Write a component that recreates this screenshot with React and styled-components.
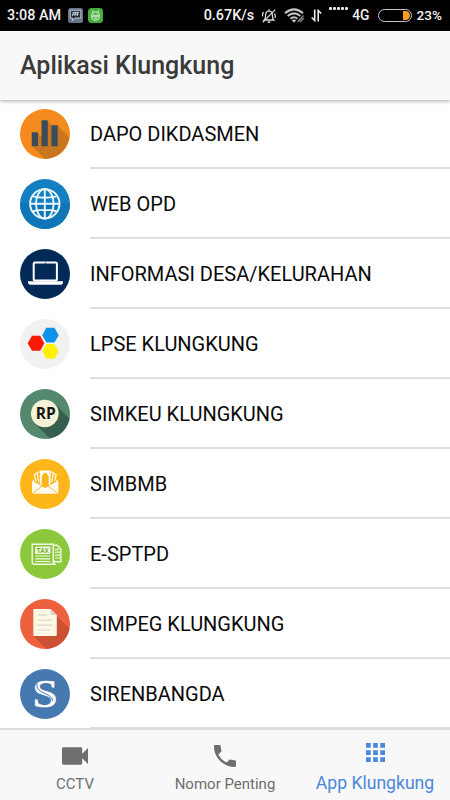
import React from "react";
import styled, { createGlobalStyle, css } from "styled-components";

const Colors = {
  bar: "#f8f8f8",
  title: "#3a3a3a",
  text: "#0a0a0a",
  line: "#dedede",
  muted: "#6e6e6e",
  blue: "#4a87dd",
};

const Bars = () => (
  <>
    <circle cx="25" cy="25" r="25" fill="#f58b1f" />
    <path
      d="M17.5 23.5L22 28V11.5L27.5 11.5L32 17L37.5 16.5L49 28A25 25 0 0 1 25 50L12 37Z"
      fill="#c8761f"
      clipPath="url(#disc)"
    />
    <g fill="#3b4d58">
      <rect x="11.7" y="23.2" width="6.3" height="14" rx="1" />
      <rect x="21.5" y="11.3" width="6.3" height="25.9" rx="1" />
      <rect x="31.4" y="16.2" width="6.3" height="21" rx="1" />
    </g>
  </>
);

const Globe = () => (
  <>
    <circle cx="25" cy="25" r="25" fill="#1580c1" />
    <path d="M0 25Q25 21 50 25A25 25 0 0 1 0 25Z" fill="#0f77b8" />
    <g fill="none" stroke="#e9f8fc" strokeWidth="1.9">
      <circle cx="24.8" cy="24.8" r="14.7" />
      <ellipse cx="24.8" cy="24.8" rx="8.8" ry="14.7" />
      <path d="M24.8 10V39.7M10 24.8H39.7M13 17.4Q24.8 20 36.6 17.4M13 32.2Q24.8 29.6 36.6 32.2" />
    </g>
  </>
);

const Laptop = () => (
  <>
    <circle cx="25" cy="25" r="25" fill="#032a57" />
    <rect
      x="13.7"
      y="13.5"
      width="23.2"
      height="18"
      rx="1.2"
      fill="none"
      stroke="#fff"
      strokeWidth="2"
    />
    <circle cx="25.3" cy="13.8" r="0.6" fill="#032a57" />
    <path d="M8 32.2H43V33.8Q42.6 35.7 40.8 35.7H10.2Q8.4 35.7 8 33.8Z" fill="#fff" />
  </>
);

const Hexagons = () => (
  <>
    <circle cx="25" cy="25" r="25" fill="#f1f1f1" />
    <path d="M26.3 8.8H34.5L38.7 16.2L34.5 23.6H26.3L22.2 16.2Z" fill="#0f93ea" />
    <path d="M12 16.8H20.2L24.4 24.3L20.2 31.8H12L7.7 24.3Z" fill="#f91804" />
    <path d="M26.3 24.9H34.5L38.7 32.3L34.5 39.7H26.3L22.2 32.3Z" fill="#fff008" />
  </>
);

const Rupiah = () => (
  <>
    <circle cx="25" cy="25" r="25" fill="#54896f" />
    <path d="M34.5 14.5L52 32V52H32L15 34.5Z" fill="#36604d" clipPath="url(#disc)" />
    <circle cx="24.8" cy="24.5" r="13.8" fill="#f4f1d6" />
    <IconText x="25.7" y="30.2" textLength="20" lengthAdjust="spacingAndGlyphs" $size={15.8}>
      RP
    </IconText>
  </>
);

const Envelope = () => (
  <>
    <circle cx="25" cy="25" r="25" fill="#fdb61a" />
    <g fill="none" stroke="#fffaf0" strokeWidth="1.2" strokeLinejoin="round">
      <path d="M15.8 22L14.2 15.6L17 14.3M34.6 22L36.2 15.6L33.4 14.3" />
      <path d="M18.6 23L17 13.8L19.6 12.8M31.8 23L33.4 13.8L30.8 12.8" />
    </g>
    <path
      d="M19.8 11.6H30.6V25L28.6 26.2V17.4Q27.2 14 25.2 13.8Q23.2 14 21.8 17.4V26.2L19.8 25Z"
      fill="#fffaf0"
    />
    <path
      d="M12 22.3L14.2 20.8V22.8L25.1 29L36.1 22.8V20.8L38.4 22.3V33.3Q38.4 34.8 36.9 34.8H13.5Q12 34.8 12 33.3Z"
      fill="#fffaf0"
    />
    <path
      d="M13 34.2L21.4 27.6Q25.2 24.4 29 27.6L37.4 34.2"
      fill="none"
      stroke="#fdb61a"
      strokeWidth="0.9"
    />
    <path d="M22.2 17.5Q25.2 13.8 28.2 17.5V24.6L25.2 26.4L22.2 24.6Z" fill="#fdb61a" />
  </>
);

const Tax = () => (
  <>
    <circle cx="25" cy="25" r="25" fill="#8bc83c" />
    <g fill="none" stroke="#f2fae6" strokeWidth="1.4">
      <path d="M12.2 15.2H33.3V33.2L35 35.3H14.4Q12.2 35.3 12.2 33Z" />
      <path d="M33.4 16.3H37L40.9 20.2V32.8H35.6Q33.8 32.8 33.8 31" />
      <path d="M15.3 27H30.2M15.3 29.8H30.2M15.3 32.5H30.2" strokeWidth="1.2" />
      <path d="M35 20.3H39M35 23.2H40M35 26.1H40M35 29H40" strokeWidth="1.2" />
    </g>
    <rect x="15.2" y="17.6" width="15.2" height="7.4" fill="#f2fae6" />
    <IconText x="22.8" y="23.7" textLength="12" $size={6.4} $fill="#76ae32">
      TAX
    </IconText>
  </>
);

const Sheet = () => (
  <>
    <circle cx="25" cy="25" r="25" fill="#ee613e" />
    <path d="M36.7 17L52 32V52H28L13.5 37Z" fill="#cc5034" clipPath="url(#disc)" />
    <path
      d="M14.5 10H30.7L36.8 16V35.8Q36.8 37 35.6 37H14.5Q13.3 37 13.3 35.8V11.2Q13.3 10 14.5 10Z"
      fill="#fbf8e6"
    />
    <path d="M30.7 10V16H36.8Z" fill="#ddd5c3" />
    <path
      d="M18 16.2H27M18 21.2H32.2M18 26.2H32.2M18 31H29.8"
      stroke="#d9d7c8"
      strokeWidth="1.2"
    />
  </>
);

const Sirenbangda = () => (
  <>
    <circle cx="25" cy="25" r="25" fill="#4679b0" />
    <IconText
      x="25.3"
      y="38"
      textLength="26"
      lengthAdjust="spacingAndGlyphs"
      $size={41}
      $fill="#fff"
      $serif
    >
      S
    </IconText>
    <path
      d="M17.2 14.5Q15.8 19.4 21 22.6C26 25.4 32.2 26.6 32.6 31.8"
      fill="none"
      stroke="#4679b0"
      strokeWidth="1"
    />
  </>
);

const apps = [
  { name: "DAPO DIKDASMEN", icon: Bars },
  { name: "WEB OPD", icon: Globe },
  { name: "INFORMASI DESA/KELURAHAN", icon: Laptop },
  { name: "LPSE KLUNGKUNG", icon: Hexagons },
  { name: "SIMKEU KLUNGKUNG", icon: Rupiah },
  { name: "SIMBMB", icon: Envelope },
  { name: "E-SPTPD", icon: Tax },
  { name: "SIMPEG KLUNGKUNG", icon: Sheet },
  { name: "SIRENBANGDA", icon: Sirenbangda },
];

const tabs = [
  {
    name: "CCTV",
    icon: <path d="M17 10.5V7c0-.55-.45-1-1-1H4c-.55 0-1 .45-1 1v10c0 .55.45 1 1 1h12c.55 0 1-.45 1-1v-3.5l4 4v-11l-4 4z" />,
    box: "3 3 18 18",
    size: 26,
  },
  {
    name: "Nomor Penting",
    icon: <path d="M6.62 10.79c1.44 2.83 3.76 5.14 6.59 6.59l2.2-2.2c.27-.27.67-.36 1.02-.24 1.12.37 2.33.57 3.57.57.55 0 1 .45 1 1V20c0 .55-.45 1-1 1-9.39 0-17-7.61-17-17 0-.55.45-1 1-1h3.5c.55 0 1 .45 1 1 0 1.25.2 2.45.57 3.57.11.35.03.74-.25 1.02l-2.2 2.2z" />,
    box: "3 3 18 18",
    size: 22,
  },
  {
    name: "App Klungkung",
    icon: <path d="M4 8h4V4H4v4zm6 12h4v-4h-4v4zm-6 0h4v-4H4v4zm0-6h4v-4H4v4zm6 0h4v-4h-4v4zm6-10v4h4V4h-4zm-6 4h4V4h-4v4zm6 6h4v-4h-4v4zm0 6h4v-4h-4v4z" />,
    box: "4 4 16 16",
    size: 19,
    active: true,
  },
];

function StatusBar() {
  return (
    <Status>
      <StatusText>3:08 AM</StatusText>
      <Svg $w={15} $h={15} $ml={7} viewBox="0 0 15 15">
        <rect width="15" height="15" rx="2.5" fill="#65778b" />
        <path d="M2.3 2.3H12.8V10H7L4.6 12.5V10H2.3Z" fill="#26303b" stroke="#dbe2e8" strokeWidth="0.8" />
        <path d="M5.2 4.3L4.5 8M7.5 4.3L6.8 8M9.9 4.3L9.2 8M5.2 4.4H11M4.8 6.2H10.5" stroke="#e6ebef" strokeWidth="0.8" />
      </Svg>
      <Svg $w={15} $h={15} $ml={5} viewBox="0 0 15 15">
        <rect width="15" height="15" rx="3.5" fill="#47ac3e" />
        <g fill="none" stroke="#e2f6dc" strokeWidth="0.9">
          <path d="M4.2 2.2L5.3 4M10.8 2.2L9.7 4M3.4 7.3Q3.6 3.7 7.5 3.7Q11.4 3.7 11.6 7.3ZM3.4 8.7H11.6Q11.4 12.3 7.5 12.3Q3.6 12.3 3.4 8.7Z" />
          <path d="M5.6 5.8H6.4M8.6 5.8H9.4M6 10.3H9" />
        </g>
      </Svg>
      <Spacer />
      <StatusText>0.67K/s</StatusText>
      <Svg $w={16} $h={16} $ml={7} viewBox="0 0 16 16">
        <g fill="none" stroke="#d5d5d5" strokeWidth="1.3">
          <path d="M3.2 12Q4.6 10.8 4.6 7.2Q4.7 3.2 8 3.2Q11.3 3.2 11.4 7.2Q11.4 10.8 12.8 12ZM6.6 14H9.4M8 1.3V3" />
          <path d="M1.8 14.2L14.2 1.6M2.5 4Q1 6 1.6 8.4M13.6 5.5Q14.8 8 14 10" />
        </g>
      </Svg>
      <Svg $w={21} $h={15} $ml={7} viewBox="0 0 21 15">
        <g fill="none" stroke="#c4c4c4" strokeWidth="2">
          <path d="M1 5.2Q10 -2.4 19 5.2M3.7 8.1Q10 2.6 16.3 8.1M6.4 10.8Q10 7.6 13.4 10.8" />
        </g>
        <path d="M7.8 12.2Q10 10.6 12.2 12.2L10 14.8Z" fill="#c4c4c4" />
        <path d="M13.5 13.8L19.5 7.5M15.8 14L19.8 10" stroke="#8c8c8c" strokeWidth="1.4" />
      </Svg>
      <Svg $w={11} $h={13} $ml={6} viewBox="0 0 11 13">
        <path d="M3.7 0.5V11.5L0.7 8.5M7.2 12.5V1.5L10.2 4.5" fill="none" stroke="#eee" strokeWidth="1.6" />
      </Svg>
      <Signal>
        {[0, 1, 2, 3, 4].map((dot) => (
          <Dot key={dot} />
        ))}
      </Signal>
      <StatusText $size={13.8}>4G</StatusText>
      <Battery>
        <Charge />
      </Battery>
      <StatusText $size={13.6}>23%</StatusText>
    </Status>
  );
}

function App() {
  return (
    <Screen>
      <GlobalStyle />
      <Svg $w={0} $h={0}>
        <clipPath id="disc">
          <circle cx="25" cy="25" r="25" />
        </clipPath>
      </Svg>
      <StatusBar />
      <Header>
        <Title>Aplikasi Klungkung</Title>
      </Header>
      <List>
        {apps.map(({ name, icon: Icon }) => (
          <Row key={name}>
            <Svg $w={50} $h={50} viewBox="0 0 50 50">
              <Icon />
            </Svg>
            <Name>{name}</Name>
          </Row>
        ))}
      </List>
      <TabBar>
        {tabs.map((tab) => (
          <Tab key={tab.name} $active={tab.active}>
            <TabIcon>
              <Svg $w={tab.size} $h={tab.size} viewBox={tab.box} fill="currentColor">
                {tab.icon}
              </Svg>
            </TabIcon>
            <TabLabel $active={tab.active}>{tab.name}</TabLabel>
          </Tab>
        ))}
      </TabBar>
    </Screen>
  );
}

export default App;

const GlobalStyle = createGlobalStyle`
  * {
    box-sizing: border-box;
  }
  body {
    margin: 0;
    font-family: Roboto, "Liberation Sans", sans-serif;
  }
`;

const Screen = styled.div`
  display: flex;
  flex-direction: column;
  width: 450px;
  height: 800px;
  overflow: hidden;
  background: #fff;
`;

const Svg = styled.svg`
  display: block;
  flex: none;
  width: ${({ $w }) => $w}px;
  height: ${({ $h }) => $h}px;
  margin-left: ${({ $ml = 0 }) => $ml}px;
`;

const IconText = styled.text`
  font-family: "Open Sans", sans-serif;
  font-size: ${({ $size }) => $size}px;
  font-weight: 700;
  fill: ${({ $fill = "#151713" }) => $fill};
  text-anchor: middle;
  ${({ $serif }) =>
    $serif &&
    css`
      font-family: "Liberation Serif", serif;
      font-weight: 400;
      stroke: #fff;
      stroke-width: 0.7px;
    `}
`;

const Status = styled.div`
  display: flex;
  flex: none;
  align-items: center;
  height: 31px;
  padding: 0 8px 0 7px;
  background: #000;
`;

const StatusText = styled.span`
  font-size: ${({ $size = 14.4 }) => $size}px;
  font-weight: 500;
  line-height: 31px;
  color: #f2f2f2;
  white-space: nowrap;
`;

const Spacer = styled.div`
  flex: 1;
`;

const Signal = styled.div`
  display: flex;
  align-self: flex-start;
  gap: 1px;
  margin: 7px 4px 0 7px;
`;

const Dot = styled.span`
  width: 3px;
  height: 3px;
  border-radius: 1px;
  background: #e8e8e8;
`;

const Battery = styled.div`
  display: flex;
  justify-content: flex-end;
  width: 34px;
  height: 13px;
  margin: 0 5px 0 8px;
  padding: 1px;
  border: 1px solid #c9c9c9;
  border-radius: 7px;
`;

const Charge = styled.div`
  width: 7px;
  background: #f79d27;
  border-radius: 0 5px 5px 0;
`;

const Header = styled.header`
  position: relative;
  display: flex;
  flex: none;
  align-items: center;
  height: 69px;
  padding: 0 20px;
  background: ${Colors.bar};
  box-shadow: 0 1px 4px rgba(0, 0, 0, 0.36);
`;

const Title = styled.h1`
  margin: 0;
  font-size: 25px;
  font-weight: 500;
  color: ${Colors.title};
`;

const List = styled.main`
  flex: 1;
  min-height: 0;
  margin-top: -1px;
  overflow: hidden;
`;

const Row = styled.div`
  display: flex;
  align-items: center;
  gap: 20px;
  height: 70px;
  padding-left: 20px;
`;

const Name = styled.div`
  flex: 1;
  height: 70px;
  border-bottom: 2px solid ${Colors.line};
  font-size: 20px;
  line-height: 70px;
  color: ${Colors.text};
`;

const TabBar = styled.nav`
  position: relative;
  display: grid;
  flex: none;
  grid-template-columns: repeat(3, 1fr);
  height: 72px;
  border-top: 2px solid #dcdcdc;
  background: ${Colors.bar};
`;

const Tab = styled.div`
  display: flex;
  flex-direction: column;
  align-items: center;
  padding-top: ${({ $active }) => ($active ? 9 : 12)}px;
  color: ${({ $active }) => ($active ? Colors.blue : Colors.muted)};
`;

const TabIcon = styled.div`
  display: flex;
  align-items: center;
  height: 27px;
`;

const TabLabel = styled.span`
  margin-top: ${({ $active }) => ($active ? 7 : 5)}px;
  font-size: ${({ $active }) => ($active ? 17.6 : 15)}px;
  line-height: 20px;
  white-space: nowrap;
`;
